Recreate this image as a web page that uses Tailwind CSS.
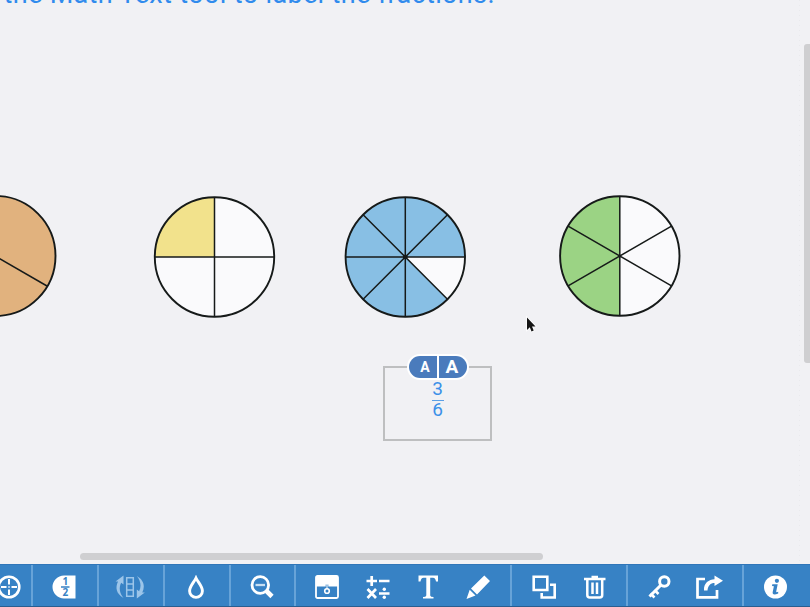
<!DOCTYPE html>
<html lang="en">
<head>
<meta charset="utf-8">
<title>Fractions</title>
<script src="https://cdn.jsdelivr.net/npm/@tailwindcss/browser@4"></script>
</head>
<body class="w-[810px] h-[607px] overflow-hidden flex flex-col bg-[#f1f1f4]">
<main class="relative h-[564px] w-full shrink-0 overflow-hidden">
  <svg class="absolute inset-0" width="810" height="564" viewBox="0 0 810 564">
    <text x="3.5" y="3.3" font-size="27" fill="#308bed" textLength="491" font-family="Roboto, sans-serif">the Math Text tool to label the fractions.</text>
    <g stroke="#161a19" stroke-width="1.5">
      <circle cx="-4.500" cy="256" r="60" fill="#e1b27e" stroke-width="1.900"/>
      <path d="M-5 256L47 286"/>
      <circle cx="214.500" cy="257" r="60" fill="#fafafc" stroke="none"/>
      <path d="M214.500 257V197A60 60 0 0 0 154.500 257Z" fill="#f2e28c" stroke="none"/>
      <path d="M214.500 197V317M154.500 257H274.500"/>
      <circle cx="214.500" cy="257" r="59.700" fill="none" stroke-width="1.900"/>
      <circle cx="405.300" cy="257" r="59.700" fill="#88bfe4" stroke="none"/>
      <path d="M405.300 257H465A59.700 59.700 0 0 1 447.500 299.200Z" fill="#fafafc" stroke="none"/>
      <path d="M405.300 197V317M345.300 257H465.300M363.100 214.800L447.500 299.200M447.500 214.800L363.100 299.200"/>
      <circle cx="405.300" cy="257" r="59.700" fill="none" stroke-width="1.900"/>
      <circle cx="405.300" cy="257" r="1.600" fill="#161a19"/>
      <circle cx="619.800" cy="256" r="59.700" fill="#fafafc" stroke="none"/>
      <path d="M619.800 196.300A59.700 59.700 0 0 0 619.800 315.700Z" fill="#9bd384" stroke="none"/>
      <path d="M619.800 196V316M568.100 226.100L671.500 285.900M671.500 226.100L568.100 285.900"/>
      <circle cx="619.800" cy="256" r="59.700" fill="none" stroke-width="1.900"/>
    </g>
    <path d="M799.500 0V564" stroke="#eaeaed" stroke-dasharray="1 4"/>
    <path d="M527 317.500V330L529.800 327.300L531.500 331.500L533.700 330.500L532 326.500H535.500Z" fill="#151515" stroke="#fff" stroke-width="1.500" paint-order="stroke"/>
  </svg>
  <div class="absolute left-[383px] top-[366px] w-[109px] h-[75px] border-2 border-[#bebfc0] font-[Roboto,sans-serif]">
    <div class="flex flex-col items-center pt-[12px] text-[#3c90e8] text-[19px] leading-[18px]">
      <span>3</span>
      <span class="w-[12px] h-px mt-[2px] bg-[#5c9fe5]"></span>
      <span>6</span>
    </div>
  </div>
  <div class="absolute left-[407px] top-[354px] w-[62px] h-[26px] rounded-full bg-white p-[2px] flex gap-[2px] text-white font-bold font-[Roboto,sans-serif]">
    <span class="w-[28px] rounded-l-full bg-[#4a7bbc] flex items-center justify-center text-[14px] pl-[4px] pt-px">A</span>
    <span class="w-[28px] rounded-r-full bg-[#4a7bbc] flex items-center justify-center text-[19px] pr-[2px]">A</span>
  </div>
  <div class="absolute left-[80px] top-[553px] w-[463px] h-[7px] rounded-full bg-[#cfcfd1]"></div>
  <div class="absolute left-[804px] top-[44px] w-[10px] h-[319px] rounded-[3px] bg-[#cfcfd1]"></div>
</main>
<nav class="flex h-[43px] w-[810px] shrink-0 bg-[#3782c5] border-t border-t-[#3076b9] border-b border-b-[#2a5e90]">
  <div class="w-[33px] shrink-0 border-r-2 border-[#67a3d8] flex items-center pt-[3px]">
    <svg class="-ml-[3px] shrink-0" width="24" height="24" fill="none" stroke="#fff" stroke-width="2"><circle cx="12" cy="12" r="10.300" stroke-width="2.600"/><path d="M12 4V9.500M12 14.500V20M4 12H9.500M14.500 12H20"/><path d="M11 12H13M12 11V13" stroke-width="1" opacity=".7"/></svg>
  </div>
  <div class="w-[66px] shrink-0 border-r-2 border-[#67a3d8] flex items-center justify-center pt-[3px]">
    <svg class="shrink-0 -ml-[3px]" width="24" height="24"><path d="M12 .5H23.500V23.500H12A12 11.500 0 0 1 0.500 12A12 11.500 0 0 1 12 .5Z" fill="#fff"/><path d="M9 12H17.500" stroke="#3782c5" stroke-width="1.500"/><text x="13.300" y="10" font-size="10" font-weight="700" text-anchor="middle" fill="#3782c5" font-family="Open Sans, sans-serif">1</text><text x="13.300" y="21" font-size="10" font-weight="700" text-anchor="middle" fill="#3782c5" font-family="Open Sans, sans-serif">2</text></svg>
  </div>
  <div class="w-[66px] shrink-0 border-r-2 border-[#67a3d8] flex items-center justify-center pt-[3px]">
    <svg class="shrink-0 -ml-[2px]" width="30" height="24" fill="none" stroke="#9cc5e9" stroke-width="1.500"><path d="M11.700 2.700H18.300V21.300H11.700ZM11.700 9H18.300M11.700 15H18.300"/><g fill="#9cc5e9" stroke="none"><path d="M.5 6.500L8.500 .5V9.500L6.200 7.800C3.700 12.500 4.500 18 8.500 23C1 18.500 .2 12.500 3 6.500Z"/><path d="M29.800 17.500L21.800 23.500V14.500L24.100 16.200C26.600 11.500 25.800 6 21.800 1C29.300 5.500 30.100 11.500 27.300 17.500Z"/></g></svg>
  </div>
  <div class="w-[66px] shrink-0 border-r-2 border-[#67a3d8] flex items-center justify-center pt-[3px]">
    <svg class="shrink-0 -ml-[2px]" width="24" height="24"><path d="M12 3C10 7.300 5.600 11.300 5.600 16A6.400 6.400 0 0 0 18.400 16C18.400 11.300 14 7.300 12 3Z" fill="none" stroke="#fff" stroke-width="2.900"/></svg>
  </div>
  <div class="w-[65px] shrink-0 border-r-2 border-[#67a3d8] flex items-center justify-center pt-[3px]">
    <svg class="shrink-0 -ml-[2px]" width="24" height="24" fill="none" stroke="#fff"><circle cx="10.300" cy="10" r="8.300" stroke-width="2.800"/><path d="M16 15.500L22 21.500" stroke-width="4.600"/><path d="M5.500 10H15" stroke="#c7dff3" stroke-width="2.300"/></svg>
  </div>
  <div class="w-[216px] shrink-0 border-r-2 border-[#67a3d8] flex items-center pl-[19px] pt-[3px]">
    <svg class="shrink-0" width="24" height="24"><rect x="1" y="1" width="22" height="22" rx="1.500" fill="none" stroke="#fff" stroke-width="1.800"/><path d="M1 1H23V11.500H1Z" fill="#fff"/><path d="M12 9.500V14" stroke="#3782c5" stroke-width="2.600"/><path d="M12 9V14" stroke="#fff" stroke-width="1"/><circle cx="12" cy="16" r="2.300" fill="none" stroke="#fff" stroke-width="1.600"/></svg>
    <svg class="shrink-0 ml-[27px]" width="24" height="24" fill="none" stroke="#fff" stroke-width="2.700"><path d="M.5 6H11M5.700 1V11M13 6H23.500M1.500 14L10 23M10 14L1.500 23M13 18.500H23.500"/><circle cx="18.300" cy="14.300" r="1.700" fill="#fff" stroke="none"/><circle cx="18.300" cy="22.300" r="1.700" fill="#fff" stroke="none"/></svg>
    <svg class="shrink-0 ml-[26px]" width="24" height="24"><path d="M2.500 .5H22V6.500H20Q19.500 3 17 2.700H14.200V20.500Q14.500 22 17.500 22V23.500H7V22Q10 22 10.300 20.500V2.700H7.500Q5 3 4.500 6.500H2.500Z" fill="#fff"/></svg>
    <svg class="shrink-0 ml-[26px]" width="24" height="24" fill="#fff"><path d="M18.300 .5L24 6L11 19.500L5 13.500ZM3.700 14.800L9.500 20.500L.5 24Z"/></svg>
  </div>
  <div class="w-[116px] shrink-0 border-r-2 border-[#67a3d8] flex items-center pl-[20px] pt-[3px] gap-[27px]">
    <svg class="shrink-0" width="24" height="24" fill="none" stroke="#fff" stroke-width="2.600"><path d="M1.700 1.800H15.300V15H1.700Z"/><path d="M18 9.700H22.700V22.500H9.700V18" /></svg>
    <svg class="shrink-0" width="24" height="24" fill="none" stroke="#fff" stroke-width="2.500"><path d="M1 4H22.500M8.500 2H15" /><path d="M4.300 4V20Q4.300 22.500 6.800 22.500H16.700Q19.200 22.500 19.200 20V4"/><path d="M9.500 7.500V19M14 7.500V19"/></svg>
  </div>
  <div class="w-[116px] shrink-0 border-r-2 border-[#67a3d8] flex items-center pl-[20px] pt-[3px] gap-[23px]">
    <svg class="shrink-0" width="24" height="24" fill="none" stroke="#fff"><circle cx="16.300" cy="6.500" r="4.700" stroke-width="3"/><path d="M13 10L1.500 21.500" stroke-width="3"/><path d="M2.500 18.500L6.500 22.500M6.500 15L10.500 19" stroke-width="2.600"/></svg>
    <svg class="shrink-0" width="28" height="24" fill="none" stroke="#fff"><path d="M10 4H2.500V22.300H22V15" stroke-width="2.700"/><path d="M9 15.500C8.500 8 14 4.500 19.500 4.300V.5L28 5.800L19.500 11V8C15.500 8 13 10.500 12.500 15.500Z" fill="#fff" stroke="none"/></svg>
  </div>
  <div class="flex-1 flex items-center pl-[20px] pt-[3px]">
    <svg class="shrink-0" width="24" height="24"><circle cx="11.500" cy="12" r="11.500" fill="#fff"/><path d="M8.300 9.300H13.700L12.200 16.500Q12.200 17.700 14.200 16.700V18.500Q8 21 8.700 17L9.900 11.300L8 11Z" fill="#3782c5"/><circle cx="12.900" cy="5.800" r="2.100" fill="#3782c5"/></svg>
  </div>
</nav>
</body>
</html>
